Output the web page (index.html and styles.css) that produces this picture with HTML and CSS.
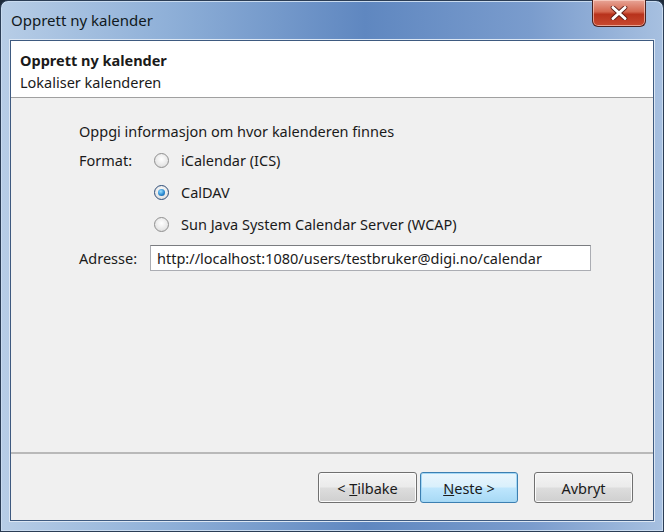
FILE: index.html
```html
<!DOCTYPE html>
<html lang="no">
<head>
    <meta charset="UTF-8">
    <title>Opprett ny kalender</title>
    <link rel="stylesheet" href="styles.css">
</head>
<body>
    <div class="window">
        <div class="titlebar">
            <span class="title">Opprett ny kalender</span>
            <span class="close-btn">
                <svg width="18" height="14" viewBox="0 0 18 14">
                    <path d="M3 1.5 L15 12.5 M15 1.5 L3 12.5" stroke="#5a1a14" stroke-width="4.6" stroke-linecap="round"/>
                    <path d="M3 1.5 L15 12.5 M15 1.5 L3 12.5" stroke="#ffffff" stroke-width="3" stroke-linecap="round"/>
                </svg>
            </span>
        </div>
        <div class="client">
            <div class="page-header">
                <div class="page-title">Opprett ny kalender</div>
                <div class="page-desc">Lokaliser kalenderen</div>
            </div>
            <div class="page-body">
                <p class="intro">Oppgi informasjon om hvor kalenderen finnes</p>
                <div class="row">
                    <span class="row-label">Format:</span>
                    <div class="radio-list">
                        <label class="radio"><span class="radio-dot"></span>iCalendar (ICS)</label>
                        <label class="radio"><span class="radio-dot checked"></span>CalDAV</label>
                        <label class="radio"><span class="radio-dot"></span>Sun Java System Calendar Server (WCAP)</label>
                    </div>
                </div>
                <div class="row address-row">
                    <span class="row-label">Adresse:</span>
                    <div class="text-input">http://localhost:1080/users/testbruker@digi.no/calendar</div>
                </div>
            </div>
            <div class="page-footer">
                <button class="btn">&lt; <u>T</u>ilbake</button>
                <button class="btn default"><u>N</u>este &gt;</button>
                <button class="btn cancel">Avbryt</button>
            </div>
        </div>
    </div>
</body>
</html>
```
FILE: styles.css
```css
* {
    margin: 0;
    padding: 0;
    box-sizing: border-box;
}

body {
    font-family: "Noto Sans", "Open Sans", sans-serif;
    font-size: 14.5px;
    color: #1a1a1a;
    background: #1d2a3a;
}

.window {
    width: 664px;
    height: 532px;
    display: flex;
    flex-direction: column;
    background: linear-gradient(90deg, #b7cde6 0%, #8fb0d8 25%, #5f87c0 55%, #7a9ccd 80%, #a7c0e0 100%);
    border: 1px solid #2b3d55;
    border-radius: 8px 8px 0 0;
    box-shadow: inset 0 0 0 1px #c9dbef;
}

.titlebar {
    height: 39px;
    display: flex;
    justify-content: space-between;
    align-items: flex-start;
    padding-left: 10px;
    padding-right: 17px;
}

.title {
    margin-top: 9px;
    font-size: 15px;
    color: #101820;
}

.close-btn {
    width: 54px;
    height: 27px;
    margin-top: -1px;
    display: flex;
    align-items: center;
    justify-content: center;
    border: 1px solid #4a2220;
    border-top: none;
    border-radius: 0 0 6px 6px;
    background: linear-gradient(180deg, #e8a597 0%, #d4664e 45%, #b8321c 55%, #c84a30 100%);
    box-shadow: inset 0 0 0 1px rgba(255, 220, 210, 0.6);
}

.client {
    flex: 1;
    margin: 0 9px 10px 9px;
    display: flex;
    flex-direction: column;
    background: #f0f0f0;
    border: 1px solid #3e5a80;
    box-shadow: 0 0 0 1px #dbe6f3;
}

.page-header {
    height: 57px;
    background: #fff;
    border-bottom: 1px solid #a0a0a0;
    padding: 8px 0 0 9px;
}

.page-title {
    font-weight: bold;
    line-height: 22px;
}

.page-desc {
    line-height: 22px;
}

.page-body {
    flex: 1;
    padding: 22px 0 0 68px;
}

.intro {
    line-height: 22px;
    margin-bottom: 7px;
}

.row {
    display: flex;
    align-items: flex-start;
}

.row-label {
    width: 71px;
    line-height: 22px;
}

.radio-list {
    display: flex;
    flex-direction: column;
    gap: 10px;
    padding-left: 4px;
}

.radio {
    display: flex;
    align-items: center;
    height: 22px;
}

.radio-dot {
    width: 15px;
    height: 15px;
    border-radius: 50%;
    border: 1px solid #8f8f8f;
    background: radial-gradient(circle at 50% 40%, #ffffff 0%, #e8e8e8 60%, #d0d0d0 100%);
    margin-right: 12px;
    position: relative;
}

.radio-dot.checked {
    border-color: #2c4c78;
}

.radio-dot.checked::after {
    content: "";
    position: absolute;
    left: 3px;
    top: 3px;
    width: 7px;
    height: 7px;
    border-radius: 50%;
    background: radial-gradient(circle at 40% 35%, #9be0ff 0%, #2a8ad2 55%, #14508c 100%);
}

.address-row {
    margin-top: 10px;
    align-items: center;
}

.text-input {
    width: 441px;
    height: 26px;
    background: #fff;
    border: 1px solid #abadb3;
    border-top-color: #7a7c80;
    padding: 0 6px;
    line-height: 24px;
}

.page-footer {
    height: 68px;
    border-top: 2px solid #b9b9b9;
    display: flex;
    justify-content: flex-end;
    padding: 18px 20px 0 0;
}

.btn {
    width: 99px;
    height: 31px;
    font-family: inherit;
    font-size: 14.5px;
    color: #1a1a1a;
    border: 1px solid #707070;
    border-radius: 3px;
    background: linear-gradient(180deg, #f4f4f4 0%, #ebebeb 48%, #dddddd 52%, #cfcfcf 100%);
    box-shadow: inset 0 0 0 1px #fbfbfb;
}

.btn.default {
    width: 98px;
    margin-left: 3px;
    border-color: #3c7fb1;
    background: linear-gradient(180deg, #eaf6fd 0%, #d9f0fc 48%, #bee6fd 52%, #a7d9f5 100%);
    box-shadow: inset 0 0 0 1px #a4d8f6;
}

.btn.cancel {
    margin-left: 16px;
}
```
